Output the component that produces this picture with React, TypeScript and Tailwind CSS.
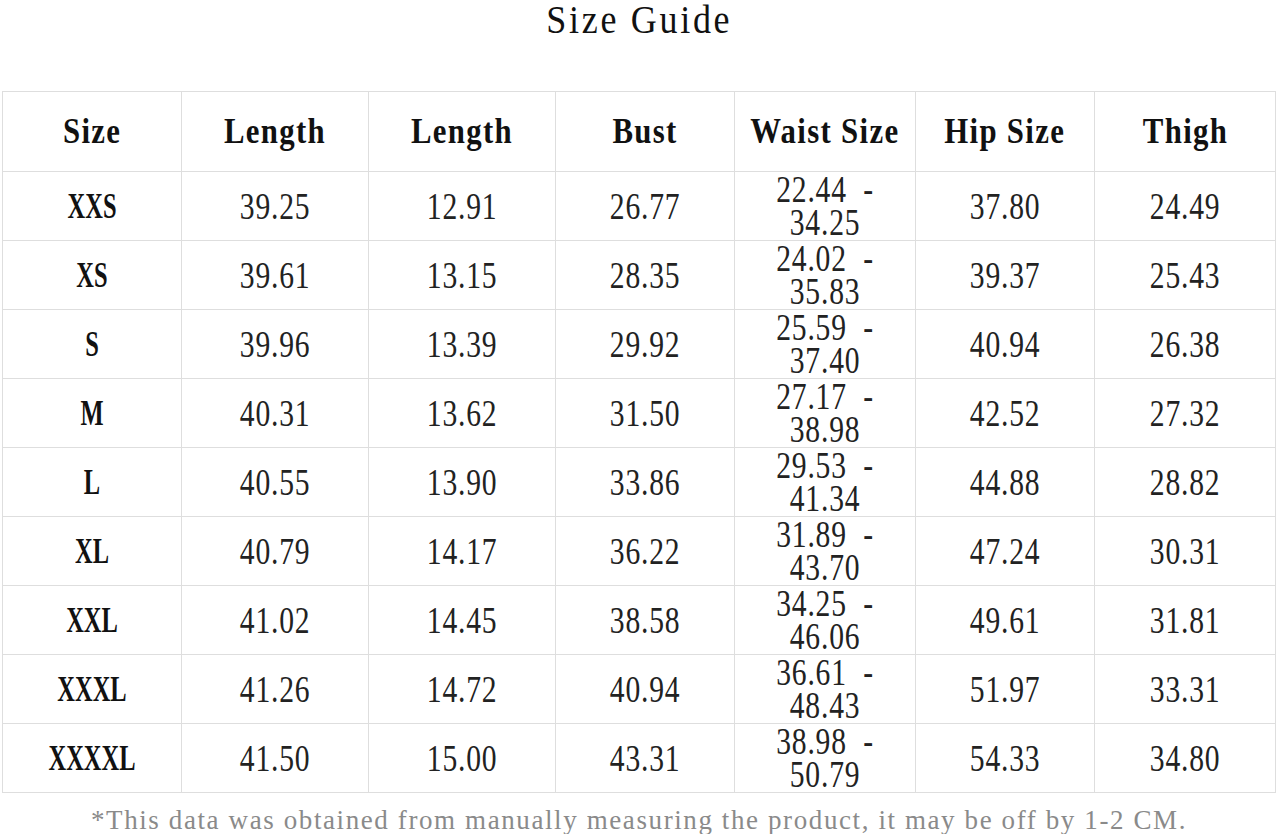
import React from 'react';

const headers = ['Size', 'Length', 'Length', 'Bust', 'Waist Size', 'Hip Size', 'Thigh'];
const widths = ['w-[179px]', 'w-[187px]', 'w-[187px]', 'w-[179px]', 'w-[181px]', 'w-[179px]', 'w-[181px]'];

const rows: string[][] = [
    ['XXS', '39.25', '12.91', '26.77', '22.44  -\n34.25', '37.80', '24.49'],
    ['XS', '39.61', '13.15', '28.35', '24.02  -\n35.83', '39.37', '25.43'],
    ['S', '39.96', '13.39', '29.92', '25.59  -\n37.40', '40.94', '26.38'],
    ['M', '40.31', '13.62', '31.50', '27.17  -\n38.98', '42.52', '27.32'],
    ['L', '40.55', '13.90', '33.86', '29.53  -\n41.34', '44.88', '28.82'],
    ['XL', '40.79', '14.17', '36.22', '31.89  -\n43.70', '47.24', '30.31'],
    ['XXL', '41.02', '14.45', '38.58', '34.25  -\n46.06', '49.61', '31.81'],
    ['XXXL', '41.26', '14.72', '40.94', '36.61  -\n48.43', '51.97', '33.31'],
    ['XXXXL', '41.50', '15.00', '43.31', '38.98  -\n50.79', '54.33', '34.80'],
];

// condensed serif look, close to the narrow mono face of the original
const Narrow: React.FC<{ children: React.ReactNode; className?: string }> = ({ children, className }) => (
    <span className={`inline-block origin-center whitespace-pre ${className ?? ''}`}>{children}</span>
);

const App: React.FC = () => {
    return (
        <div className="w-[1278px] h-[834px] bg-white overflow-hidden" style={{ fontFamily: '"Liberation Serif", "DejaVu Serif", serif' }}>
            <h1 className="h-[38px] pt-[2px] flex items-start justify-center text-[40px] leading-[36px] font-normal text-[#111]">
                <Narrow className="scale-x-[0.9] tracking-[3px]">Size Guide</Narrow>
            </h1>
            <div className="mt-[53px] pl-[2px]">
                <table className="border-collapse table-fixed w-[1273px]">
                    <thead>
                        <tr className="h-[80px]">
                            {headers.map((h, i) => (
                                <th key={i} className={`${widths[i]} border border-[#dedede] text-center align-middle text-[35px] leading-[36px] font-bold text-[#111] p-0`}>
                                    <Narrow className="scale-x-[0.88] tracking-[1.5px]">{h}</Narrow>
                                </th>
                            ))}
                        </tr>
                    </thead>
                    <tbody>
                        {rows.map((row, r) => (
                            <tr key={r} className="h-[69px]">
                                {row.map((cell, c) => (
                                    <td key={c} className={`border border-[#dedede] text-center align-middle p-0 leading-[33px] ${c === 0 ? 'text-[36px] font-bold text-[#111]' : 'text-[37px] text-[#222]'}`}>
                                        <Narrow className={c === 0 ? 'scale-x-[0.68]' : 'scale-x-[0.8] tracking-[1px]'}>{cell}</Narrow>
                                    </td>
                                ))}
                            </tr>
                        ))}
                    </tbody>
                </table>
            </div>
            <p className="mt-[12px] text-center text-[27px] text-[#8a8a8a] leading-[30px]">
                <Narrow className="tracking-[1.6px]">*This data was obtained from manually measuring the product, it may be off by 1-2 CM.</Narrow>
            </p>
        </div>
    );
};

export default App;
